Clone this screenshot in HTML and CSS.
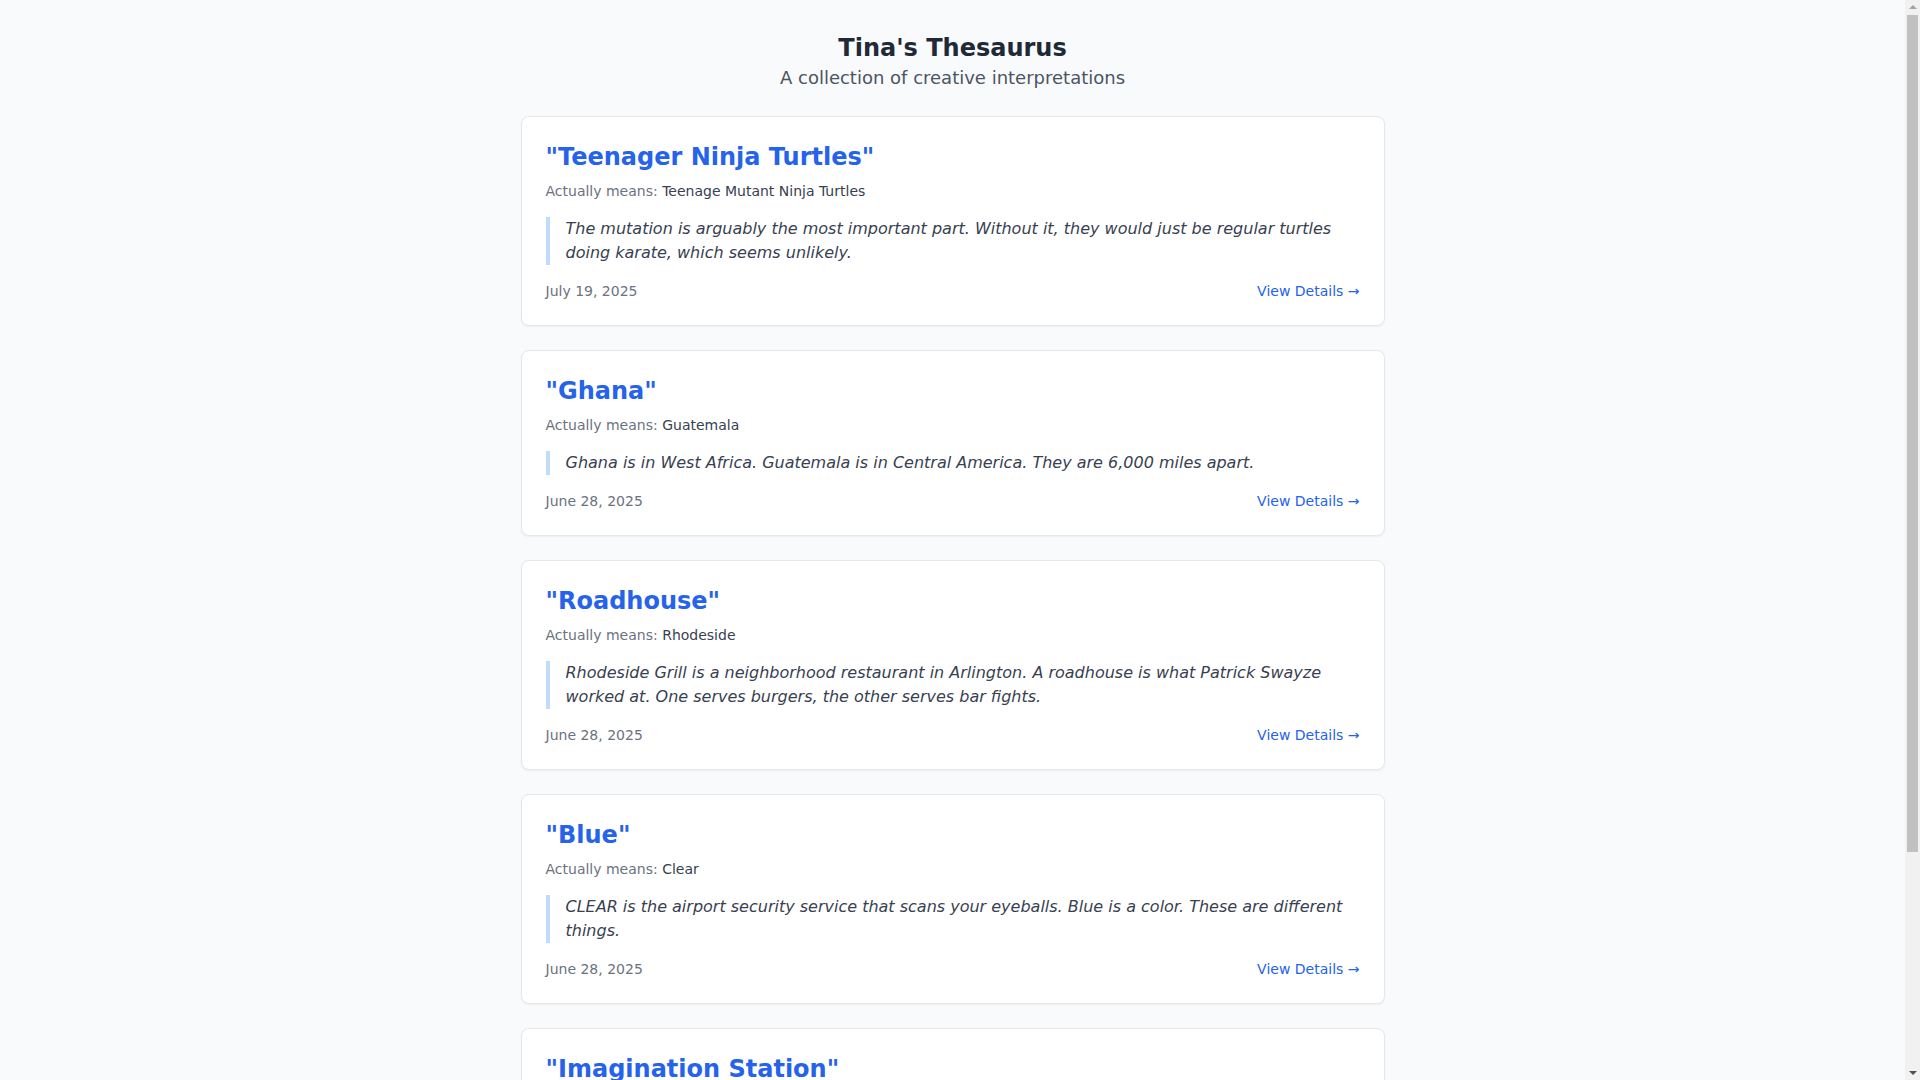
FILE: index.html
```html
<!DOCTYPE html>
<html lang="en">
<head>
  <meta charset="UTF-8">
  <meta name="viewport" content="width=device-width, initial-scale=1.0">
  <title>Tina's Thesaurus</title>
  <link rel="stylesheet" href="styles.css">
</head>
<body>
  <div class="container">
      <!-- Header -->
      <header class="page-header">
          <h1>Tina's Thesaurus</h1>
          <p>A collection of creative interpretations</p>
      </header>

      <!-- Entries -->
      <div class="entries">
          <article class="entry">
              <h2 class="entry-word">"Teenager Ninja Turtles"</h2>
              <p class="entry-meaning">Actually means: <span>Teenage Mutant Ninja Turtles</span></p>
              <blockquote class="entry-note">The mutation is arguably the most important part. Without it, they would just be regular turtles doing karate, which seems unlikely.</blockquote>
              <div class="entry-footer">
                  <span class="entry-date">July 19, 2025</span>
                  <a href="#" class="entry-link">View Details &rarr;</a>
              </div>
          </article>

          <article class="entry">
              <h2 class="entry-word">"Ghana"</h2>
              <p class="entry-meaning">Actually means: <span>Guatemala</span></p>
              <blockquote class="entry-note">Ghana is in West Africa. Guatemala is in Central America. They are 6,000 miles apart.</blockquote>
              <div class="entry-footer">
                  <span class="entry-date">June 28, 2025</span>
                  <a href="#" class="entry-link">View Details &rarr;</a>
              </div>
          </article>

          <article class="entry">
              <h2 class="entry-word">"Roadhouse"</h2>
              <p class="entry-meaning">Actually means: <span>Rhodeside</span></p>
              <blockquote class="entry-note">Rhodeside Grill is a neighborhood restaurant in Arlington. A roadhouse is what Patrick Swayze worked at. One serves burgers, the other serves bar fights.</blockquote>
              <div class="entry-footer">
                  <span class="entry-date">June 28, 2025</span>
                  <a href="#" class="entry-link">View Details &rarr;</a>
              </div>
          </article>

          <article class="entry">
              <h2 class="entry-word">"Blue"</h2>
              <p class="entry-meaning">Actually means: <span>Clear</span></p>
              <blockquote class="entry-note">CLEAR is the airport security service that scans your eyeballs. Blue is a color. These are different things.</blockquote>
              <div class="entry-footer">
                  <span class="entry-date">June 28, 2025</span>
                  <a href="#" class="entry-link">View Details &rarr;</a>
              </div>
          </article>

          <article class="entry">
              <h2 class="entry-word">"Imagination Station"</h2>
              <p class="entry-meaning">Actually means: <span>Imagination Playground</span></p>
              <blockquote class="entry-note">One is a place for imagining. The other is also a place for imagining, but with slides.</blockquote>
              <div class="entry-footer">
                  <span class="entry-date">June 28, 2025</span>
                  <a href="#" class="entry-link">View Details &rarr;</a>
              </div>
          </article>
      </div>
  </div>

  <!-- window scrollbar (drawn, the browser hides its own) -->
  <div class="scrollbar" aria-hidden="true">
      <span class="scroll-arrow up"></span>
      <span class="scroll-thumb"></span>
      <span class="scroll-arrow down"></span>
  </div>
</body>
</html>
```

FILE: styles.css
```css
body {
    margin: 0;
    padding-right: 15px;
    background-color: #f9fafb;
    font-family: "DejaVu Sans", sans-serif;
    color: #1f2937;
}
.container {
    max-width: 896px;
    margin: 0 auto;
    padding: 32px 16px;
    box-sizing: border-box;
}
.page-header {
    text-align: center;
    margin-bottom: 24px;
}
.page-header h1 {
    margin: 0;
    font-size: 24px;
    line-height: 32px;
    font-weight: 700;
    color: #1f2937;
}
.page-header p {
    margin: 0;
    font-size: 18px;
    line-height: 28px;
    color: #4b5563;
}
.entries {
    display: flex;
    flex-direction: column;
    gap: 24px;
}
.entry {
    background-color: #fff;
    border: 1px solid #e5e7eb;
    border-radius: 8px;
    box-shadow: 0 1px 2px rgba(0, 0, 0, 0.05);
    padding: 24px;
}
.entry-word {
    margin: 0 0 8px;
    font-size: 24px;
    line-height: 32px;
    font-weight: 700;
    color: #2563eb;
}
.entry-meaning {
    margin: 0 0 16px;
    font-size: 14px;
    line-height: 20px;
    color: #6b7280;
}
.entry-meaning span {
    color: #374151;
}
.entry-note {
    margin: 0 0 16px;
    padding-left: 16px;
    border-left: 4px solid #bfdbfe;
    font-size: 16px;
    line-height: 24px;
    font-style: italic;
    color: #374151;
}
.entry-footer {
    display: flex;
    justify-content: space-between;
    align-items: center;
    font-size: 14px;
    line-height: 20px;
}
.entry-date {
    color: #6b7280;
}
.entry-link {
    color: #2563eb;
    text-decoration: none;
}
.entry-link:hover {
    text-decoration: underline;
}

/* scrollbar */
.scrollbar {
    position: fixed;
    top: 0;
    right: 0;
    bottom: 0;
    width: 15px;
    background-color: #f1f1f1;
    display: flex;
    flex-direction: column;
    align-items: center;
}
.scroll-arrow {
    width: 0;
    height: 0;
    border-left: 4px solid transparent;
    border-right: 4px solid transparent;
}
.scroll-arrow.up {
    margin-top: 5px;
    border-bottom: 4px solid #a3a3a3;
}
.scroll-arrow.down {
    margin-top: auto;
    margin-bottom: 5px;
    border-top: 4px solid #505050;
}
.scroll-thumb {
    margin-top: 6px;
    width: 11px;
    height: 837px;
    background-color: #c1c1c1;
}
```
